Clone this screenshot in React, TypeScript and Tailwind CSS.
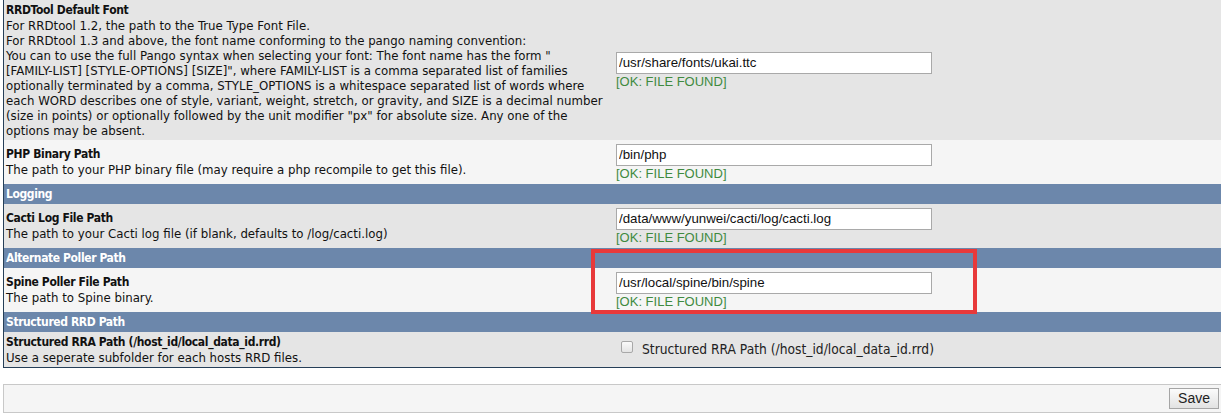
const bodyFont = "font-['DejaVu_Sans_Condensed','DejaVu_Sans',Tahoma,sans-serif]";
const inputFont = "font-['Liberation_Sans',Arial,sans-serif]";

type FieldRow = {
  title: string;
  desc: string[];
  value: string;
  height: string;
  bg: string;
};

function PathField({ value }: { value: string }) {
  return (
    <div className="flex flex-col">
      <input
        readOnly
        value={value}
        className={`h-[22px] w-[316px] border border-[#a9a9a9] bg-white px-[2px] text-[13.3px] text-[#111] outline-none ${inputFont}`}
      />
      <span className={`mt-[1px] text-[13px] leading-[14px] text-[#3f8a3f] ${inputFont}`}>
        [OK: FILE FOUND]
      </span>
    </div>
  );
}

function Row({ row }: { row: FieldRow }) {
  return (
    <div className={`grid grid-cols-[609px_1fr] ${row.height} ${row.bg}`}>
      <div className="flex flex-col justify-center px-[2px] text-[13.1px] leading-[15px] text-[#111]">
        <span className="text-[12px] font-bold tracking-[-0.35px]">{row.title}</span>
        {row.desc.map((d) => (
          <span key={d}>{d}</span>
        ))}
      </div>
      <div className="flex items-center pl-[3px]">
        <PathField value={row.value} />
      </div>
    </div>
  );
}

function Header({ label }: { label: string }) {
  return (
    <div className="flex h-[20px] items-center bg-[#6c87ab] px-[2px] text-[12px] font-bold tracking-[-0.4px] text-white">
      {label}
    </div>
  );
}

const fontRow: FieldRow = {
  title: "RRDTool Default Font",
  desc: [
    "For RRDtool 1.2, the path to the True Type Font File.",
    "For RRDtool 1.3 and above, the font name conforming to the pango naming convention:",
    'You can to use the full Pango syntax when selecting your font: The font name has the form "',
    '[FAMILY-LIST] [STYLE-OPTIONS] [SIZE]", where FAMILY-LIST is a comma separated list of families',
    "optionally terminated by a comma, STYLE_OPTIONS is a whitespace separated list of words where",
    "each WORD describes one of style, variant, weight, stretch, or gravity, and SIZE is a decimal number",
    '(size in points) or optionally followed by the unit modifier "px" for absolute size. Any one of the',
    "options may be absent.",
  ],
  value: "/usr/share/fonts/ukai.ttc",
  height: "h-[140px]",
  bg: "bg-[#e5e5e5]",
};

const phpRow: FieldRow = {
  title: "PHP Binary Path",
  desc: ["The path to your PHP binary file (may require a php recompile to get this file)."],
  value: "/bin/php",
  height: "h-[44px]",
  bg: "bg-[#f5f5f5]",
};

const logRow: FieldRow = {
  title: "Cacti Log File Path",
  desc: ["The path to your Cacti log file (if blank, defaults to /log/cacti.log)"],
  value: "/data/www/yunwei/cacti/log/cacti.log",
  height: "h-[44px]",
  bg: "bg-[#e5e5e5]",
};

const spineRow: FieldRow = {
  title: "Spine Poller File Path",
  desc: ["The path to Spine binary."],
  value: "/usr/local/spine/bin/spine",
  height: "h-[44px]",
  bg: "bg-[#f5f5f5]",
};

export default function App() {
  return (
    <div className={`relative h-[416px] w-[1221px] overflow-hidden bg-white ${bodyFont}`}>
      <div className="ml-[3px] border-b border-l border-[#263f58]">
        <Row row={fontRow} />
        <Row row={phpRow} />
        <Header label="Logging" />
        <Row row={logRow} />
        <Header label="Alternate Poller Path" />
        <Row row={spineRow} />
        <Header label="Structured RRD Path" />
        <div className="grid h-[35px] grid-cols-[609px_1fr] bg-[#e5e5e5]">
          <div className="flex flex-col justify-center px-[2px] text-[13.1px] leading-[15px] text-[#111]">
            <span className="text-[12px] font-bold tracking-[-0.35px]">
              Structured RRA Path (/host_id/local_data_id.rrd)
            </span>
            <span>Use a seperate subfolder for each hosts RRD files.</span>
          </div>
          <div className="flex items-center pl-[8px] text-[13.7px] text-[#222]">
            <span className="-mt-[5px] mr-[9px] inline-block h-[12px] w-[12px] rounded-[2px] border border-[#a8a8a8] bg-gradient-to-b from-[#fafafa] to-[#e4e4e4]" />
            <span>Structured RRA Path (/host_id/local_data_id.rrd)</span>
          </div>
        </div>
      </div>

      {/* save bar */}
      <div className="ml-[3px] mt-[16px] flex h-[29px] items-center justify-end border border-r-0 border-[#c8c8c8] bg-[#f5f5f5] pr-[2px]">
        <button
          type="button"
          className={`h-[21px] border border-[#a5a5a5] bg-gradient-to-b from-[#fbfbfb] to-[#e2e2e2] px-[8px] text-[14px] leading-[19px] text-[#222] ${inputFont}`}
        >
          Save
        </button>
      </div>

      {/* red annotation box */}
      <div className="pointer-events-none absolute left-[591px] top-[249px] h-[65px] w-[386px] border-[4px] border-[#e8393a]" />
    </div>
  );
}
